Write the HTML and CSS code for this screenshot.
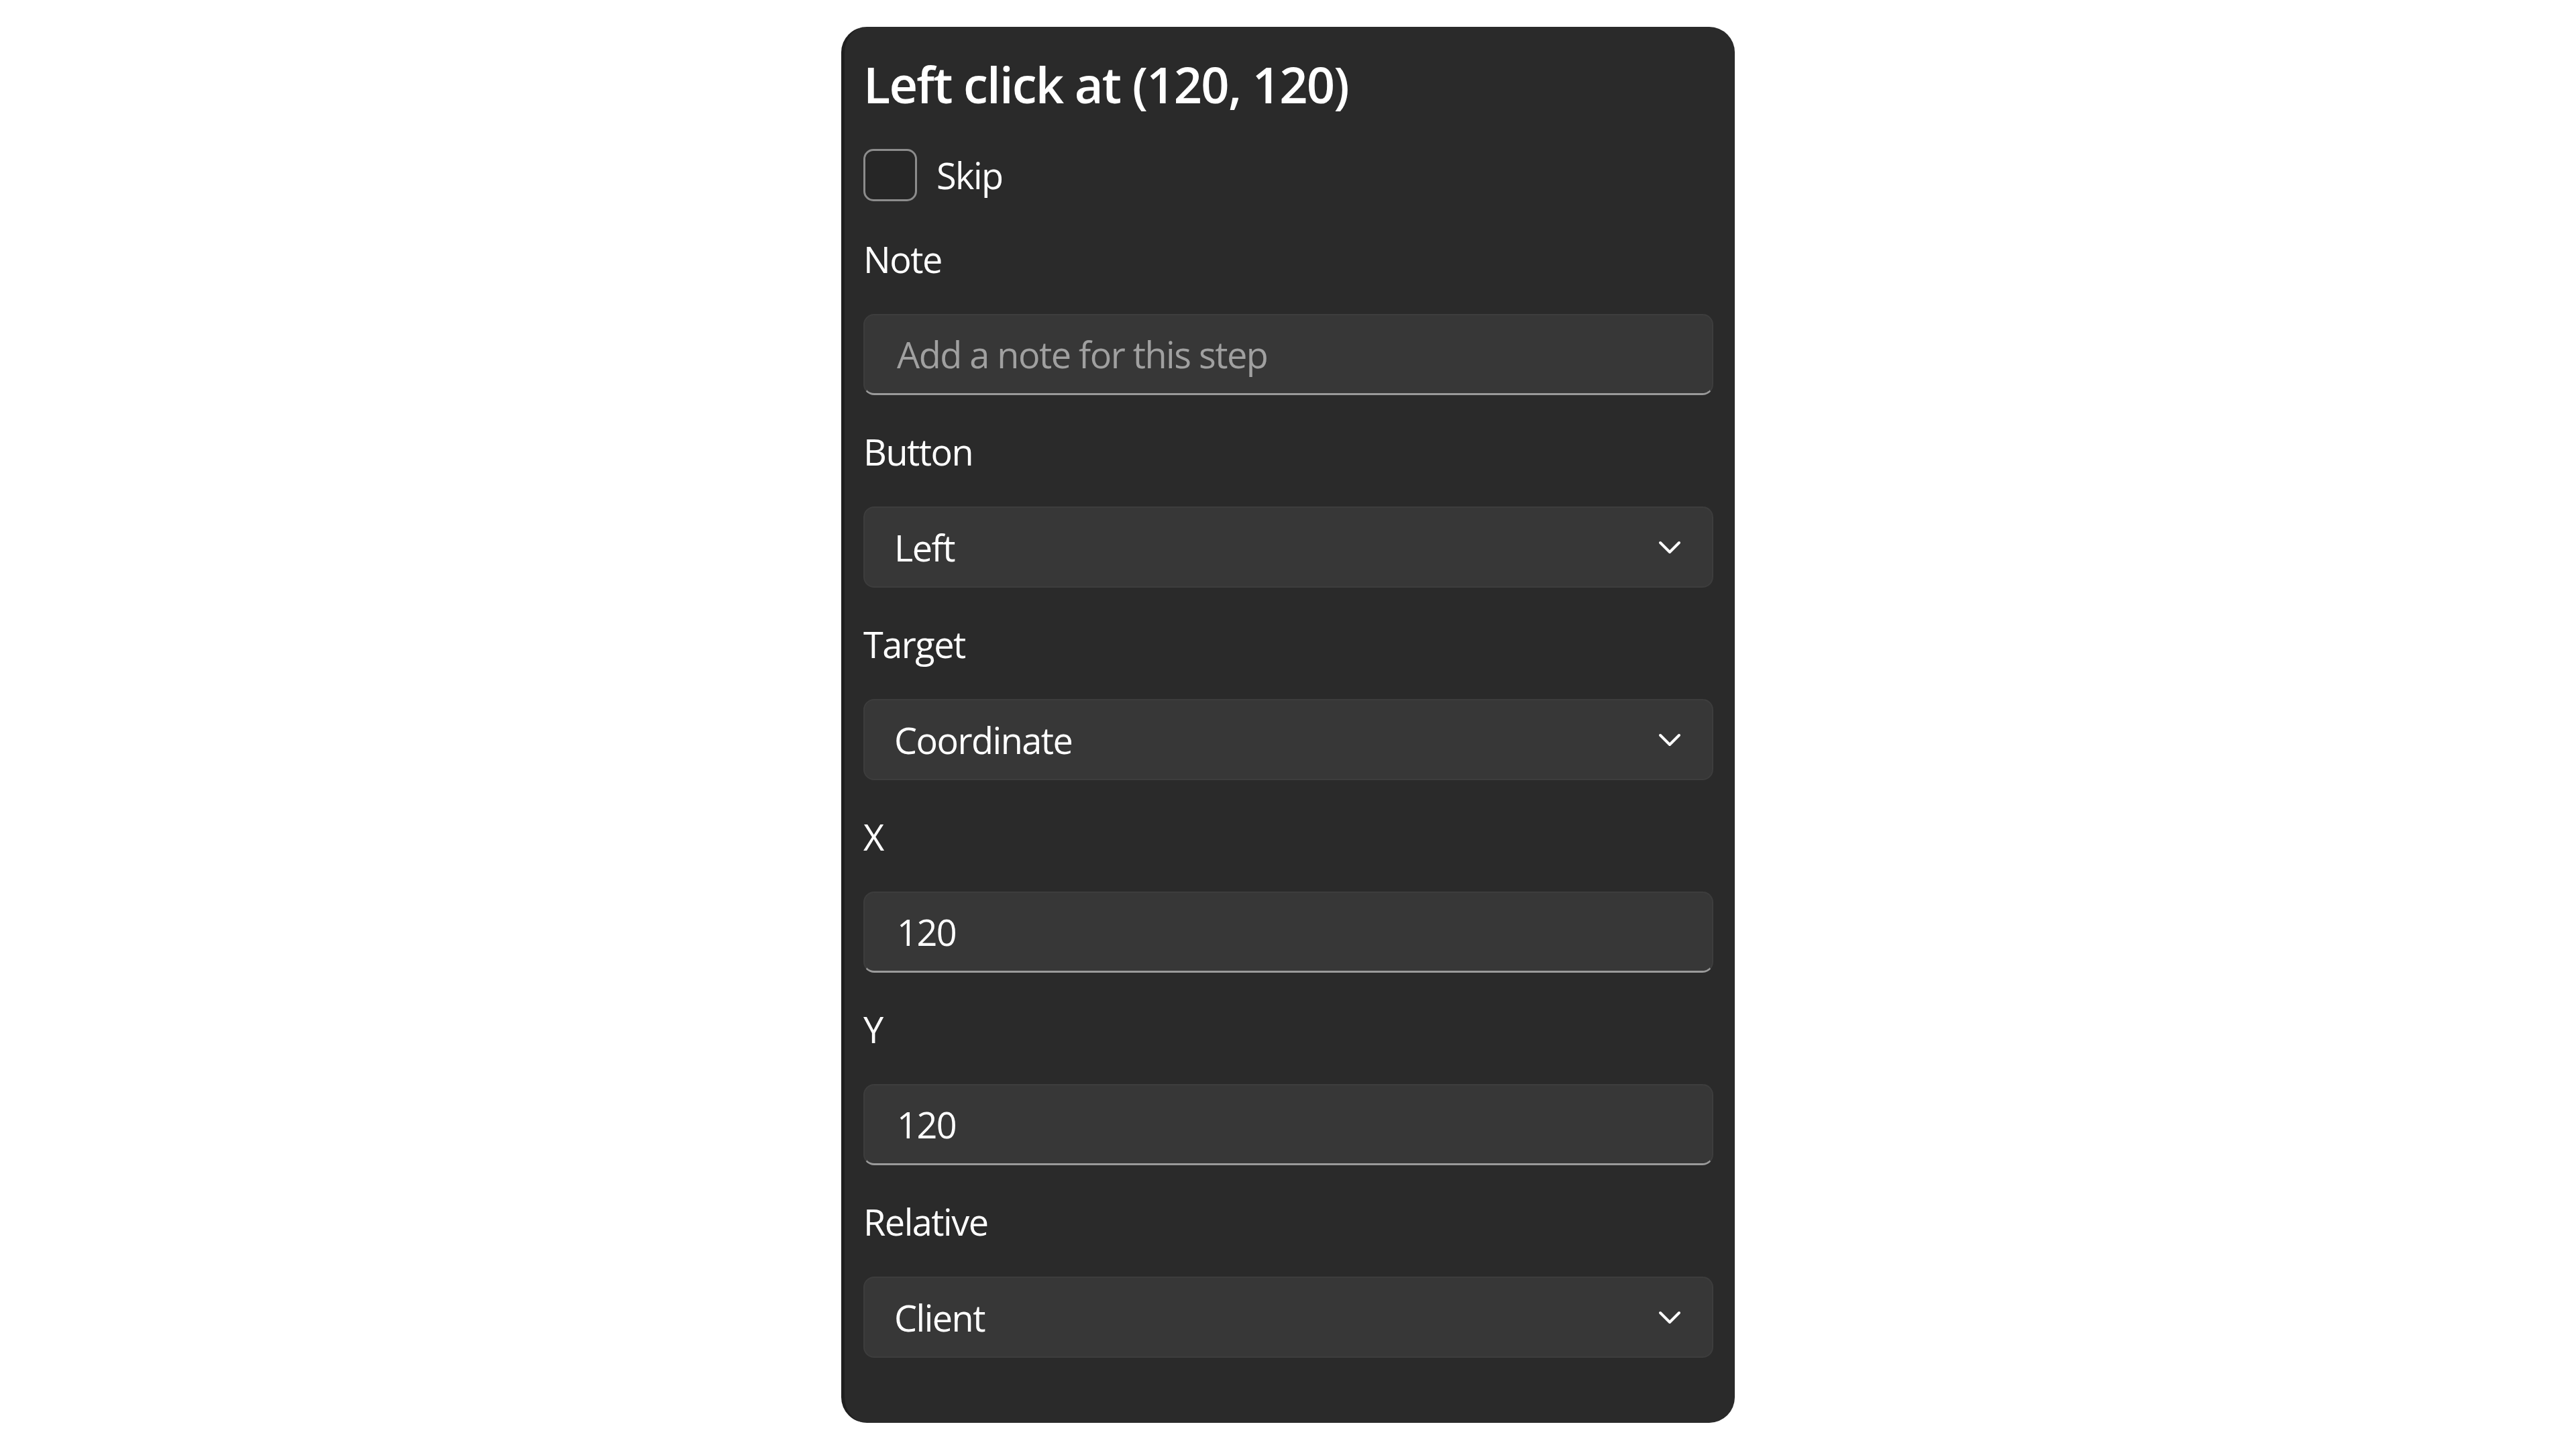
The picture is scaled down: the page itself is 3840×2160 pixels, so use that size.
FILE: index.html
```html
<!DOCTYPE html>
<html lang="en">
<head>
<meta charset="utf-8">
<title>Left click step</title>
<link rel="stylesheet" href="styles.css">
</head>
<body>
<main class="card">
  <h1 class="title">Left click at (120, 120)</h1>
  <label class="check-row">
    <span class="checkbox"></span>
    <span class="check-label">Skip</span>
  </label>
  <div class="field">
    <div class="label">Note</div>
    <div class="textbox placeholder">Add a note for this step</div>
  </div>
  <div class="field">
    <div class="label">Button</div>
    <div class="combo"><span>Left</span><svg class="chev" viewBox="0 0 34 20"><path d="M3 3 L17 17 L31 3"/></svg></div>
  </div>
  <div class="field">
    <div class="label">Target</div>
    <div class="combo"><span>Coordinate</span><svg class="chev" viewBox="0 0 34 20"><path d="M3 3 L17 17 L31 3"/></svg></div>
  </div>
  <div class="field">
    <div class="label">X</div>
    <div class="textbox">120</div>
  </div>
  <div class="field">
    <div class="label">Y</div>
    <div class="textbox">120</div>
  </div>
  <div class="field">
    <div class="label">Relative</div>
    <div class="combo"><span>Client</span><svg class="chev" viewBox="0 0 34 20"><path d="M3 3 L17 17 L31 3"/></svg></div>
  </div>
</main>
</body>
</html>
```

FILE: styles.css
```css
html, body {
  margin: 0;
  background: #ffffff;
}
body {
  display: flex;
  justify-content: center;
  padding-top: 40px;
  font-family: "Open Sans", "Noto Sans", sans-serif;
  color: #ffffff;
  letter-spacing: -1.5px;
}
.card {
  width: 1332px;
  box-sizing: border-box;
  background: #2a2a2a;
  border-left: 5px solid #1f1f1f;
  border-radius: 38px;
  padding: 37px 32px 97px 28px;
  display: flex;
  flex-direction: column;
  gap: 48px;
}
.title {
  margin: 0;
  font-size: 74px;
  line-height: 97px;
  font-weight: 600;
  letter-spacing: -1.8px;
}
.check-row {
  display: flex;
  align-items: center;
  gap: 29px;
  height: 78px;
  margin-bottom: 2px;
}
.checkbox {
  width: 80px;
  height: 78px;
  box-sizing: border-box;
  border: 3px solid #8c8c8c;
  border-radius: 15px;
  background: #262626;
}
.check-label {
  font-size: 54px;
  line-height: 72px;
}
.field {
  display: flex;
  flex-direction: column;
  gap: 46px;
}
.label {
  font-size: 54px;
  line-height: 72px;
}
.textbox, .combo {
  height: 121px;
  box-sizing: border-box;
  background: #373737;
  border: 2px solid #3d3d3d;
  border-radius: 16px;
  display: flex;
  align-items: center;
  font-size: 54px;
  color: #ffffff;
}
.textbox {
  border-bottom: 3px solid #9a9a9a;
  padding: 0 48px;
}
.placeholder {
  color: #a0a0a0;
}
.combo {
  justify-content: space-between;
  padding: 0 46px 0 44px;
}
.chev {
  width: 34px;
  height: 20px;
  fill: none;
  stroke: #ffffff;
  stroke-width: 4;
  stroke-linecap: round;
  stroke-linejoin: round;
}
```
